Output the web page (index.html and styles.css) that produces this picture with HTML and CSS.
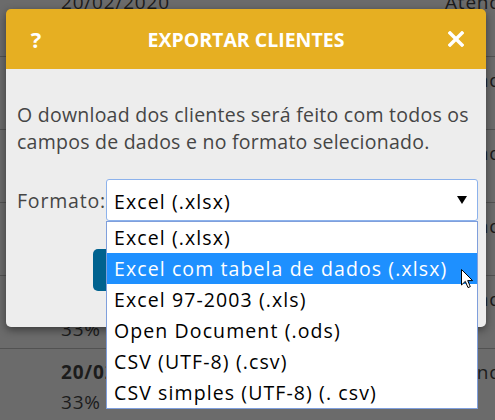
FILE: index.html
```html
<!DOCTYPE html>
<html>
<head>
    <title>Exportar clientes</title>
    <link rel="stylesheet" href="styles.css">
</head>
<body>
    <!-- Table behind the dialog -->
    <div class="page">
        <div class="row row-first">
            <div class="cell-date">20/02/2020</div>
            <div class="cell-status">Atendido</div>
        </div>
        <div class="row">
            <div class="cell-date"><b>20/02/2020</b><br>33% de 60 dias</div>
            <div class="cell-status">Atendido</div>
        </div>
        <div class="row">
            <div class="cell-date"><b>20/02/2020</b><br>33% de 60 dias</div>
            <div class="cell-status">Atendido</div>
        </div>
        <div class="row">
            <div class="cell-date"><b>20/02/2020</b><br>33% de 60 dias</div>
            <div class="cell-status">Atendido</div>
        </div>
        <div class="row">
            <div class="cell-date"><b>20/02/2020</b><br>33% de 60 dias</div>
            <div class="cell-status">Atendido</div>
        </div>
        <div class="row">
            <div class="cell-date"><b>20/02/2020</b><br>33% de 60 dias</div>
            <div class="cell-status">Atendido</div>
        </div>
    </div>

    <!-- Export dialog -->
    <div class="modal">
        <div class="modal-header">
            <span class="help">?</span>
            <span class="title">EXPORTAR CLIENTES</span>
            <span class="close">
                <svg width="16" height="16" viewBox="0 0 16 16"><path d="M2 2 L14 14 M14 2 L2 14" stroke="#fff" stroke-width="3.4" stroke-linecap="square"/></svg>
            </span>
        </div>
        <div class="modal-body">
            <p class="intro">O download dos clientes será feito com todos os campos de dados e no formato selecionado.</p>

            <div class="field">
                <label class="field-label">Formato:</label>
                <div class="select">
                    <span class="select-value">Excel (.xlsx)</span>
                    <svg class="select-arrow" width="10" height="8" viewBox="0 0 10 8"><path d="M0 0 L10 0 L5 8 Z" fill="#000"/></svg>

                    <ul class="options">
                        <li>Excel (.xlsx)</li>
                        <li class="active">Excel com tabela de dados (.xlsx)</li>
                        <li>Excel 97-2003 (.xls)</li>
                        <li>Open Document (.ods)</li>
                        <li>CSV (UTF-8) (.csv)</li>
                        <li>CSV simples (UTF-8) (. csv)</li>
                    </ul>
                </div>
            </div>

            <div class="footer">
                <button class="button">Exportar</button>
            </div>
        </div>
    </div>

    <!-- mouse pointer -->
    <svg class="cursor" width="13" height="20" viewBox="0 0 13 20"><path d="M0.5 0.5 L0.5 16 L4.3 12.4 L7 18.6 L9.3 17.6 L6.7 11.6 L11.6 11.6 Z" fill="#fff" stroke="#000" stroke-width="1"/></svg>
</body>
</html>
```

FILE: styles.css
```css
body {
    margin: 0;
    overflow: hidden;
    background-color: #6b6b6b;
    font-family: "Open Sans", "Noto Sans", sans-serif;
}

/* table behind the dialog */
.page {
    margin-top: -13px;
}
.row {
    display: flex;
    height: 64px;
    padding-top: 8px;
    padding-left: 61px;
    overflow: hidden;
    border-bottom: 1px solid #525252;
    font-size: 19px;
    line-height: 30px;
    letter-spacing: 0.8px;
    color: #1c1c1c;
}
.row-first {
    height: 69px;
    padding-top: 0;
}
.cell-date {
    flex: none;
    width: 384px;
}
.cell-status {
    white-space: nowrap;
}

/* dialog */
.modal {
    position: absolute;
    left: 6px;
    top: 9px;
    width: 480px;
    border-radius: 5px;
    box-shadow: 0 3px 9px rgba(0, 0, 0, 0.45);
}
.modal-header {
    display: grid;
    grid-template-columns: 60px 1fr 60px;
    align-items: center;
    height: 60px;
    background-color: #e6af22;
    border-radius: 5px 5px 0 0;
    color: white;
    font-weight: bold;
    font-size: 19.5px;
}
.help {
    text-align: center;
    font-size: 22px;
}
.title {
    text-align: center;
}
.close {
    display: flex;
    justify-content: center;
}
.modal-body {
    background-color: #ededed;
    border-radius: 0 0 5px 5px;
    padding: 32px 8px 36px 11px;
}
.intro {
    margin: 0;
    font-size: 19.5px;
    line-height: 27px;
    letter-spacing: 0.25px;
    color: #454545;
}

.field {
    display: flex;
    align-items: center;
    margin-top: 24px;
}
.field-label {
    flex: none;
    width: 86px;
    margin-right: 3px;
    font-size: 19.5px;
    line-height: 27px;
    letter-spacing: 0.8px;
    color: #454545;
}
.select {
    position: relative;
    flex: 1;
    display: flex;
    align-items: center;
    height: 40px;
    padding: 0 10px 0 7px;
    background-color: white;
    border: 1px solid #8cb2ec;
    border-radius: 3px;
    font-size: 19.5px;
    letter-spacing: 1.1px;
    color: #000;
}
.select-value {
    flex: 1;
    padding-top: 3px;
}
.options {
    position: absolute;
    left: -1px;
    right: -1px;
    top: 41px;
    margin: 0;
    padding: 0;
    list-style: none;
    background-color: white;
    border: 1px solid #7f9fdc;
}
.options li {
    height: 31px;
    line-height: 31px;
    padding-left: 7px;
    white-space: nowrap;
}
.options li.active {
    background-color: #1e90ff;
    color: white;
}

.footer {
    display: flex;
    justify-content: center;
    margin-top: 28px;
}
.button {
    width: 310px;
    height: 42px;
    background-color: #00628f;
    border: none;
    border-radius: 5px;
    color: white;
    font-family: "Open Sans", sans-serif;
    font-size: 18px;
}

.cursor {
    position: absolute;
    left: 461px;
    top: 269px;
}
```
